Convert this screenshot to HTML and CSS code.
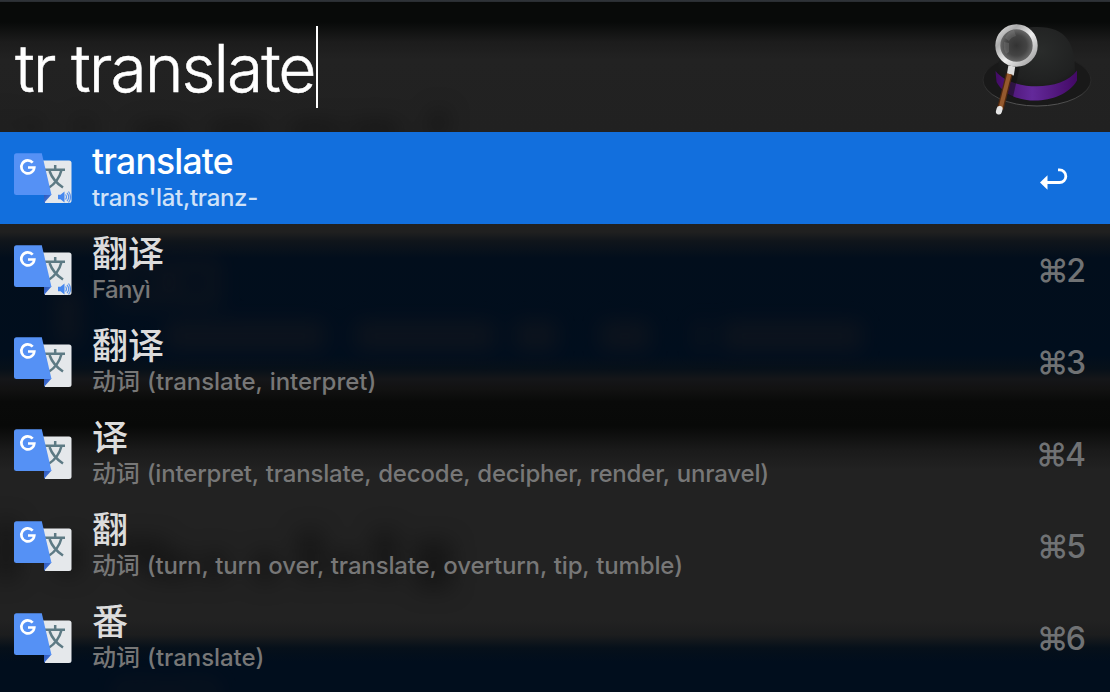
FILE: index.html
```
<!DOCTYPE html>
<html lang="zh-CN">
<head>
<meta charset="utf-8">
<title>tr translate</title>
<link rel="stylesheet" href="styles.css">
</head>
<body>
<svg class="defs" aria-hidden="true">
  <defs>
    <linearGradient id="fold" x1="0" y1="0" x2="1" y2="1"><stop offset="0" stop-color="#3157b5"/><stop offset="1" stop-color="#4280ee"/></linearGradient>
    <symbol id="translate" viewBox="0 0 60 52">
      <path d="M29 7.500h26q2.500 0 2.500 2.500V47.500q0 2.500-2.500 2.500H31z" fill="#e5e8eb"/>
      <path d="M30 50V41.500h7.500z" fill="url(#fold)"/>
      <path d="M31 16.700h20M41.200 12v4.700M47.500 17c-2 8-6 13.500-13 18M35.500 18c2.500 7 6.500 12 13.500 16.500" fill="none" stroke="#5d7a84" stroke-width="2.500"/>
      <path d="M2.500 0.300h25.300L37.500 42H2.500q-2.500 0-2.500-2.500V2.800Q0 .3 2.500.3z" fill="#5591f5"/>
      <path d="M18.700 9.600A6.500 6.500 0 1 0 20.300 14.500h-6.300" fill="none" stroke="#fff" stroke-width="2.700"/>
    </symbol>
    <symbol id="speaker" viewBox="0 0 15 12">
      <path d="M1 3.800h2.500L7.500.5v11L3.500 8.200H1z" fill="#4687ee"/>
      <path d="M8.500 3.500q2 2.500 0 5M10 1.800q3.500 4.200 0 8.400M11.500.5q4.200 5.500 0 11" fill="none" stroke="#5b94ee" stroke-width="1.200"/>
    </symbol>
  </defs>
</svg>
<main class="panel">
  <svg class="backdrop" viewBox="0 0 1110 692" aria-hidden="true">
    <g class="haze-dark">
      <path d="M0 122h8M32 119v16M84 119v16M135 132h50M210 130h55M290 130h50M350 130h50M441 110l-6 26" stroke-width="16"/>
      <path d="M6 520v60M68 540v35M115 550h40v28M180 552v28M215 552v28M265 552v30M310 530v50M345 552v28M385 530v50M415 552h25v26h-25" stroke-width="24"/>
    </g>
    <g class="haze-warm">
      <path d="M120 265h40v35h-40zM178 265h35v35h-35z" stroke-width="13"/>
      <path d="M165 336h160M355 336h140M515 336h42M600 336h50M695 336h12M722 336h140" stroke-width="30"/>
      <path d="M120 685h40v30h-40zM176 685h37v30h-37z" stroke-width="9"/>
      <path d="M68 290v55" stroke-width="24"/>
    </g>
  </svg>
  <header class="search">
    <div class="query">tr translate</div><span class="caret"></span>
    <svg class="hat" viewBox="0 0 110 94" aria-hidden="true">
      <defs>
        <radialGradient id="dome" cx=".55" cy=".35" r=".65"><stop offset="0" stop-color="#2a2c2b"/><stop offset=".7" stop-color="#202121"/><stop offset="1" stop-color="#151515"/></radialGradient>
        <linearGradient id="band"><stop offset="0" stop-color="#430b65"/><stop offset=".45" stop-color="#63299a"/><stop offset="1" stop-color="#430965"/></linearGradient>
        <linearGradient id="rim" x2="1" y2="1"><stop offset="0" stop-color="#e2e2e2"/><stop offset=".25" stop-color="#aaa"/><stop offset=".55" stop-color="#eee"/><stop offset="1" stop-color="#999"/></linearGradient>
        <radialGradient id="lens"><stop offset="0" stop-color="#333"/><stop offset=".55" stop-color="#444"/><stop offset="1" stop-color="#777"/></radialGradient>
        <linearGradient id="edge" x1="0" y1="0" x2="0" y2="1"><stop offset="0" stop-color="#1c1c1c"/><stop offset=".6" stop-color="#2b2b2b"/><stop offset="1" stop-color="#555"/></linearGradient>
      </defs>
      <ellipse cx="55" cy="57" rx="54" ry="26" fill="#191919" stroke="url(#edge)"/>
      <path d="M14 59C17 28 25 4 55 4s38 17 38 44l2 11q-39 27-81 0z" fill="url(#dome)"/>
      <path d="M13.500 48c16 20 66 21 81.500-.5v10c-15 26-67 27-80.500 1.500z" fill="url(#band)"/>
      <path d="M38 43l-7 31-10-5 8-26z" fill="#111" opacity=".55"/>
      <path d="M29.800 43l-1.500 9" stroke="#ddd" stroke-width="7"/>
      <path d="M27.300 51L18.300 86" stroke="#50290f" stroke-width="6.800"/>
      <path d="M27.300 51L18.300 86" stroke="#95592d" stroke-width="4.200"/>
      <path d="M17.600 86l-.7 2.500" stroke="#e5e5e5" stroke-width="6" stroke-linecap="round"/>
      <circle cx="34.500" cy="22.500" r="18.700" fill="url(#lens)" stroke="url(#rim)" stroke-width="5"/>
      <path d="M23 15q3-7 9-8l2 6q-5 1-7 5zM22 19l5 1v9l-3 2q-3-5-2-12" fill="#999" opacity=".25"/>
    </svg>
  </header>
  <ul class="results">
    <li class="row selected">
      <div class="icon"><svg class="gt"><use href="#translate"/></svg><svg class="sound"><use href="#speaker"/></svg></div>
      <div class="text"><div class="title latin">translate</div><div class="sub">trans'lāt,tranz-</div></div>
      <svg class="return" viewBox="0 0 28 22" aria-hidden="true"><path d="M7 14.500h12.500a6.200 6.200 0 0 0 0-12.700H18" fill="none" stroke="#fff" stroke-width="2.800"/><path d="M0 14.500L7.500 7.300v14.400z" fill="#fff"/></svg>
    </li>
    <li class="row">
      <div class="icon"><svg class="gt"><use href="#translate"/></svg><svg class="sound"><use href="#speaker"/></svg></div>
      <div class="text"><div class="title">翻译</div><div class="sub pinyin">Fānyì</div></div>
      <div class="key">⌘2</div>
    </li>
    <li class="row">
      <div class="icon"><svg class="gt"><use href="#translate"/></svg></div>
      <div class="text"><div class="title">翻译</div><div class="sub">动词 (translate, interpret)</div></div>
      <div class="key">⌘3</div>
    </li>
    <li class="row">
      <div class="icon"><svg class="gt"><use href="#translate"/></svg></div>
      <div class="text"><div class="title">译</div><div class="sub long">动词 (interpret, translate, decode, decipher, render, unravel)</div></div>
      <div class="key">⌘4</div>
    </li>
    <li class="row">
      <div class="icon"><svg class="gt"><use href="#translate"/></svg></div>
      <div class="text"><div class="title">翻</div><div class="sub medium">动词 (turn, turn over, translate, overturn, tip, tumble)</div></div>
      <div class="key">⌘5</div>
    </li>
    <li class="row">
      <div class="icon"><svg class="gt"><use href="#translate"/></svg></div>
      <div class="text"><div class="title">番</div><div class="sub">动词 (translate)</div></div>
      <div class="key">⌘6</div>
    </li>
  </ul>
</main>
</body>
</html>
```
FILE: styles.css
```
* { box-sizing: border-box; }
body { margin: 0; font-family: Inter, "Noto Sans CJK SC", sans-serif; }
.defs { position: absolute; width: 0; height: 0; }
.panel {
  position: relative;
  width: 1110px;
  height: 692px;
  overflow: hidden;
  background: linear-gradient(#30353a 0, #282c30 2px, #080a09 2px, #080a09 22px, #1c1c1c 42px, #222 60px, #212121 130px, #202020 232px, #10151b 241px, #020e1c 258px, #010e1d 355px, #071019 369px, #151619 379px, #121212 389px, #090a09 402px, #080908 426px, #1a1a1a 450px, #222 470px, #222 620px, #1c1d1e 635px, #06101a 648px, #010e1d 662px, #010e1d 692px);
}
.backdrop { position: absolute; inset: 0; }
.haze-dark { fill: none; stroke: #0b0b0b; opacity: .5; filter: blur(11px); }
.haze-warm { fill: none; stroke: #2b2220; opacity: .28; filter: blur(10px); }
.search { position: relative; height: 132px; display: flex; align-items: flex-start; padding-left: 15px; }
.query { width: 301px; font-size: 66px; line-height: 80px; font-weight: 300; letter-spacing: -2px; color: #fff; -webkit-text-stroke: .5px #fff; padding-top: 28px; white-space: pre; }
.caret { width: 2px; height: 82px; margin-top: 26px; background: #fff; }
.hat { width: 110px; height: 94px; margin: 23px 18px 0 auto; }
.results { position: relative; list-style: none; margin: 0; padding: 0; }
.row { height: 92px; display: flex; align-items: flex-start; padding: 0 25px 0 14px; color: #dcdcdc; }
.selected { background: #126fdd; color: #fff; }
.icon { position: relative; width: 60px; height: 52px; margin-top: 21px; }
.gt { display: block; width: 60px; height: 52px; }
.sound { position: absolute; left: 43px; top: 38px; width: 15px; height: 12px; }
.text { flex: 1; padding: 9px 0 0 18px; white-space: nowrap; }
.title { height: 42px; font-size: 36px; line-height: 42px; font-weight: 500; }
.latin { font-size: 35.5px; letter-spacing: -.8px; }
.sub { font-size: 24px; line-height: 30px; font-weight: 450; letter-spacing: -.04px; word-spacing: .8px; color: #777; }
.sub.long { letter-spacing: -.17px; }
.sub.medium { letter-spacing: -.16px; }
.selected .sub { letter-spacing: -.3px; color: #d0e2f8; }
.sub.pinyin { letter-spacing: -.6px; }
.key { margin-top: 27px; margin-right: 1.5px; font-size: 32px; line-height: 40px; font-weight: 500; letter-spacing: -2.5px; color: #707274; }
.return { width: 28px; height: 22px; margin: 36px 17px 0 0; }
```
